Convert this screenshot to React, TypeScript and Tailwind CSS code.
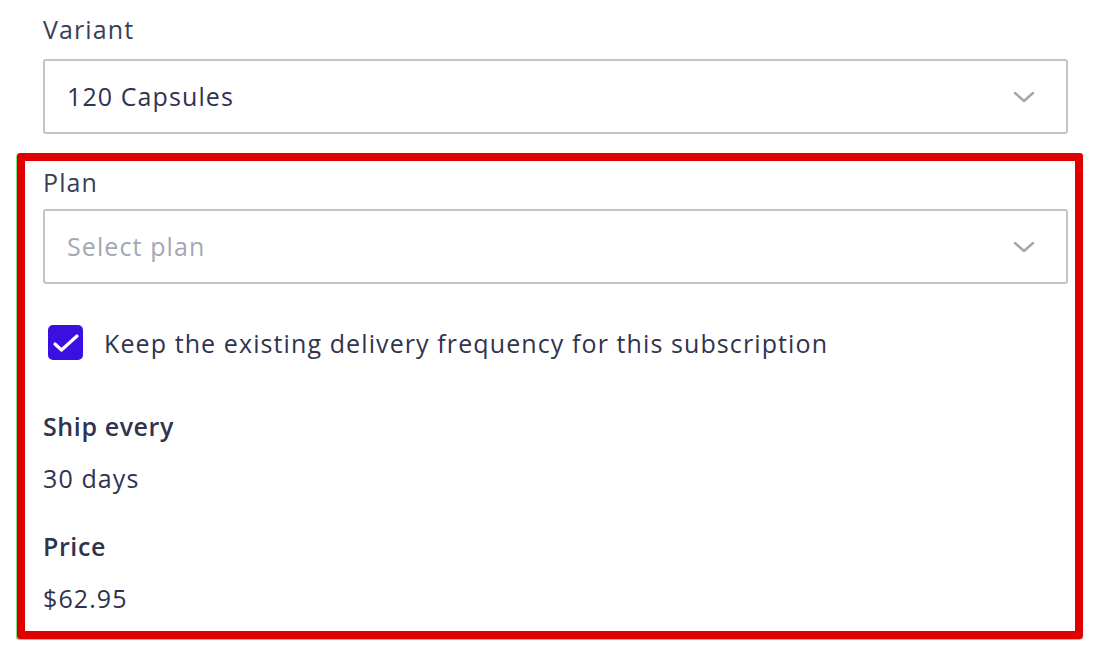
import React from "react";

function Chevron() {
  return (
    <svg width="24" height="14" viewBox="0 0 24 14" fill="none">
      <path d="M3 3 L12 11 L21 3" stroke="#a6a6a6" strokeWidth="2.4" strokeLinecap="round" strokeLinejoin="round" />
    </svg>
  );
}

function Select({ value, placeholder }: { value?: string; placeholder?: string }) {
  return (
    <div className="flex h-[75px] items-center justify-between rounded-[3px] border-2 border-[#c4c4c4] bg-white pl-[22px] pr-[30px]">
      <span className={value ? "text-[#30334f]" : "text-[#a3a7b3]"}>{value ?? placeholder}</span>
      <Chevron />
    </div>
  );
}

export default function App() {
  return (
    <div
      className="h-[656px] w-[1102px] overflow-hidden bg-white text-[25px] tracking-[1.1px] text-[#30334f]"
      style={{ fontFamily: "'Open Sans', Lato, sans-serif" }}
    >
      <div className="flex w-[1025px] flex-col pl-0 ml-[43px] pt-[13px]">
        <div className="leading-[32px] text-[#3a3d58]">Variant</div>
        <div className="mt-[14px]">
          <Select value="120 Capsules" />
        </div>
        <div className="ml-[-26px] mr-[-15px] mt-[19px] rounded-[3px] border-8 border-[#e00000] pb-[17px] pl-[18px] pr-[7px] pt-[5px] shadow-[-1px_1px_0_0_#7ee07e]">
          <div className="leading-[32px] text-[#3a3d58]">Plan</div>
          <div className="mt-[11px]">
            <Select placeholder="Select plan" />
          </div>
          <div className="mt-[41px] flex items-center gap-[21px] pl-[5px]">
            <div className="flex h-[35px] w-[35px] items-center justify-center rounded-[5px] bg-[#3a0fe0]">
              <svg width="28" height="22" viewBox="0 0 28 22" fill="none">
                <path d="M3 12 L9.5 18 L25 4" stroke="white" strokeWidth="3.2" strokeLinecap="round" strokeLinejoin="round" />
              </svg>
            </div>
            <span className="leading-[34px]">Keep the existing delivery frequency for this subscription</span>
          </div>
          <div className="mt-[50px] font-semibold leading-[32px] tracking-[0.6px]">Ship every</div>
          <div className="mt-[20px] leading-[32px]">30 days</div>
          <div className="mt-[36px] font-semibold leading-[32px] tracking-[0.6px]">Price</div>
          <div className="mt-[20px] leading-[32px]">$62.95</div>
        </div>
      </div>
    </div>
  );
}
